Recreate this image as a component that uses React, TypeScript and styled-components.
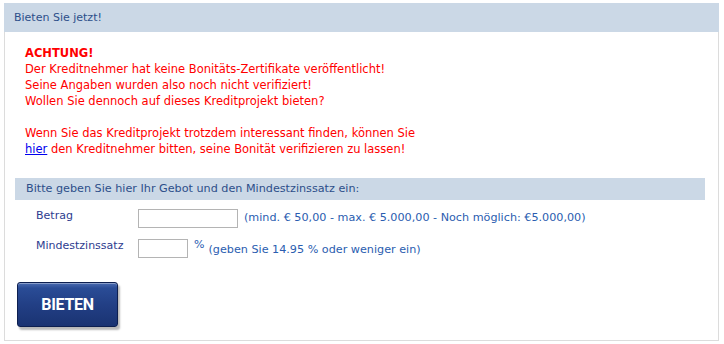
import styled, { createGlobalStyle } from 'styled-components';

const GlobalStyle = createGlobalStyle`
  body {
    margin: 0;
    background: #fff;
    font-family: "DejaVu Sans", Verdana, sans-serif;
  }
`;

export default function App() {
  return (
    <>
      <GlobalStyle />
      <Panel>
        <PanelHeader>Bieten Sie jetzt!</PanelHeader>
        <Warning>
          <strong>ACHTUNG!</strong>
          <br />
          Der Kreditnehmer hat keine Bonitäts-Zertifikate veröffentlicht!
          <br />
          Seine Angaben wurden also noch nicht verifiziert!
          <br />
          Wollen Sie dennoch auf dieses Kreditprojekt bieten?
          <br />
          <br />
          Wenn Sie das Kreditprojekt trotzdem interessant finden, können Sie
          <br />
          <a href="#">hier</a> den Kreditnehmer bitten, seine Bonität verifizieren zu lassen!
        </Warning>

        <SectionBar>Bitte geben Sie hier Ihr Gebot und den Mindestzinssatz ein:</SectionBar>

        <Form>
          <FieldRow>
            <Label>Betrag</Label>
            <Input $width={100} />
            <Hint>(mind. € 50,00 - max. € 5.000,00 - Noch möglich: €5.000,00)</Hint>
          </FieldRow>
          <FieldRow>
            <Label>Mindestzinssatz</Label>
            <Input $width={50} />
            <Percent>%</Percent>
            <Hint $low>(geben Sie 14.95 % oder weniger ein)</Hint>
          </FieldRow>
        </Form>

        <BidButton type="button">BIETEN</BidButton>
      </Panel>
    </>
  );
}

const Panel = styled.div`
  margin: 3px 0 0 4px;
  width: 715px;
  height: 338px;
  box-sizing: border-box;
  border: 1px solid #dcdcdc;
  border-top: none;
`;

const PanelHeader = styled.div`
  height: 29px;
  line-height: 29px;
  margin: 0 -1px;
  padding-left: 10px;
  background: #cbd8e6;
  color: #2d4f8a;
  font-size: 11px;
`;

const Warning = styled.div`
  padding: 13px 0 0 20px;
  color: #ff0000;
  font-size: 11.5px;
  line-height: 16px;

  strong {
    font-weight: bold;
  }

  a {
    color: #0000ee;
    text-decoration: underline;
  }
`;

const SectionBar = styled.div`
  margin: 21px 13px 0 10px;
  height: 22px;
  line-height: 22px;
  padding-left: 11px;
  background: #cbd8e6;
  color: #2d4f8a;
  font-size: 11.2px;
`;

const Form = styled.div`
  display: flex;
  flex-direction: column;
  gap: 11px;
  margin: 9px 0 0 31px;
`;

const FieldRow = styled.div`
  display: flex;
  align-items: flex-start;
  height: 19px;
`;

const Label = styled.div`
  width: 102px;
  color: #2d3c8f;
  font-size: 11px;
  line-height: 14px;
`;

const Input = styled.input<{ $width: number }>`
  width: ${(p) => p.$width}px;
  height: 19px;
  box-sizing: border-box;
  border: 1px solid #b4b4b4;
  padding: 0 2px;
  margin: 0;
`;

const Percent = styled.span`
  margin-left: 6px;
  color: #2a5db0;
  font-size: 11px;
  line-height: 12px;
`;

const Hint = styled.span<{ $low?: boolean }>`
  margin-left: ${(p) => (p.$low ? 4 : 6)}px;
  margin-top: ${(p) => (p.$low ? 4 : 2)}px;
  color: #2a5db0;
  font-size: 11.2px;
  line-height: 14px;
  white-space: nowrap;
`;

const BidButton = styled.button`
  display: block;
  margin: 24px 0 0 12px;
  width: 101px;
  height: 45px;
  padding: 0;
  border: 1px solid #0d1f50;
  border-radius: 3px;
  background: linear-gradient(
    to bottom,
    #4a6bb0 0%,
    #2a4c96 12%,
    #223f85 50%,
    #1a3372 100%
  );
  box-shadow: inset 0 1px 0 rgba(255, 255, 255, 0.35), 2px 3px 2px rgba(0, 0, 0, 0.28);
  color: #fff;
  font-family: Roboto, "Liberation Sans", sans-serif;
  font-weight: bold;
  font-size: 16px;
  letter-spacing: -0.3px;
  cursor: pointer;
`;
